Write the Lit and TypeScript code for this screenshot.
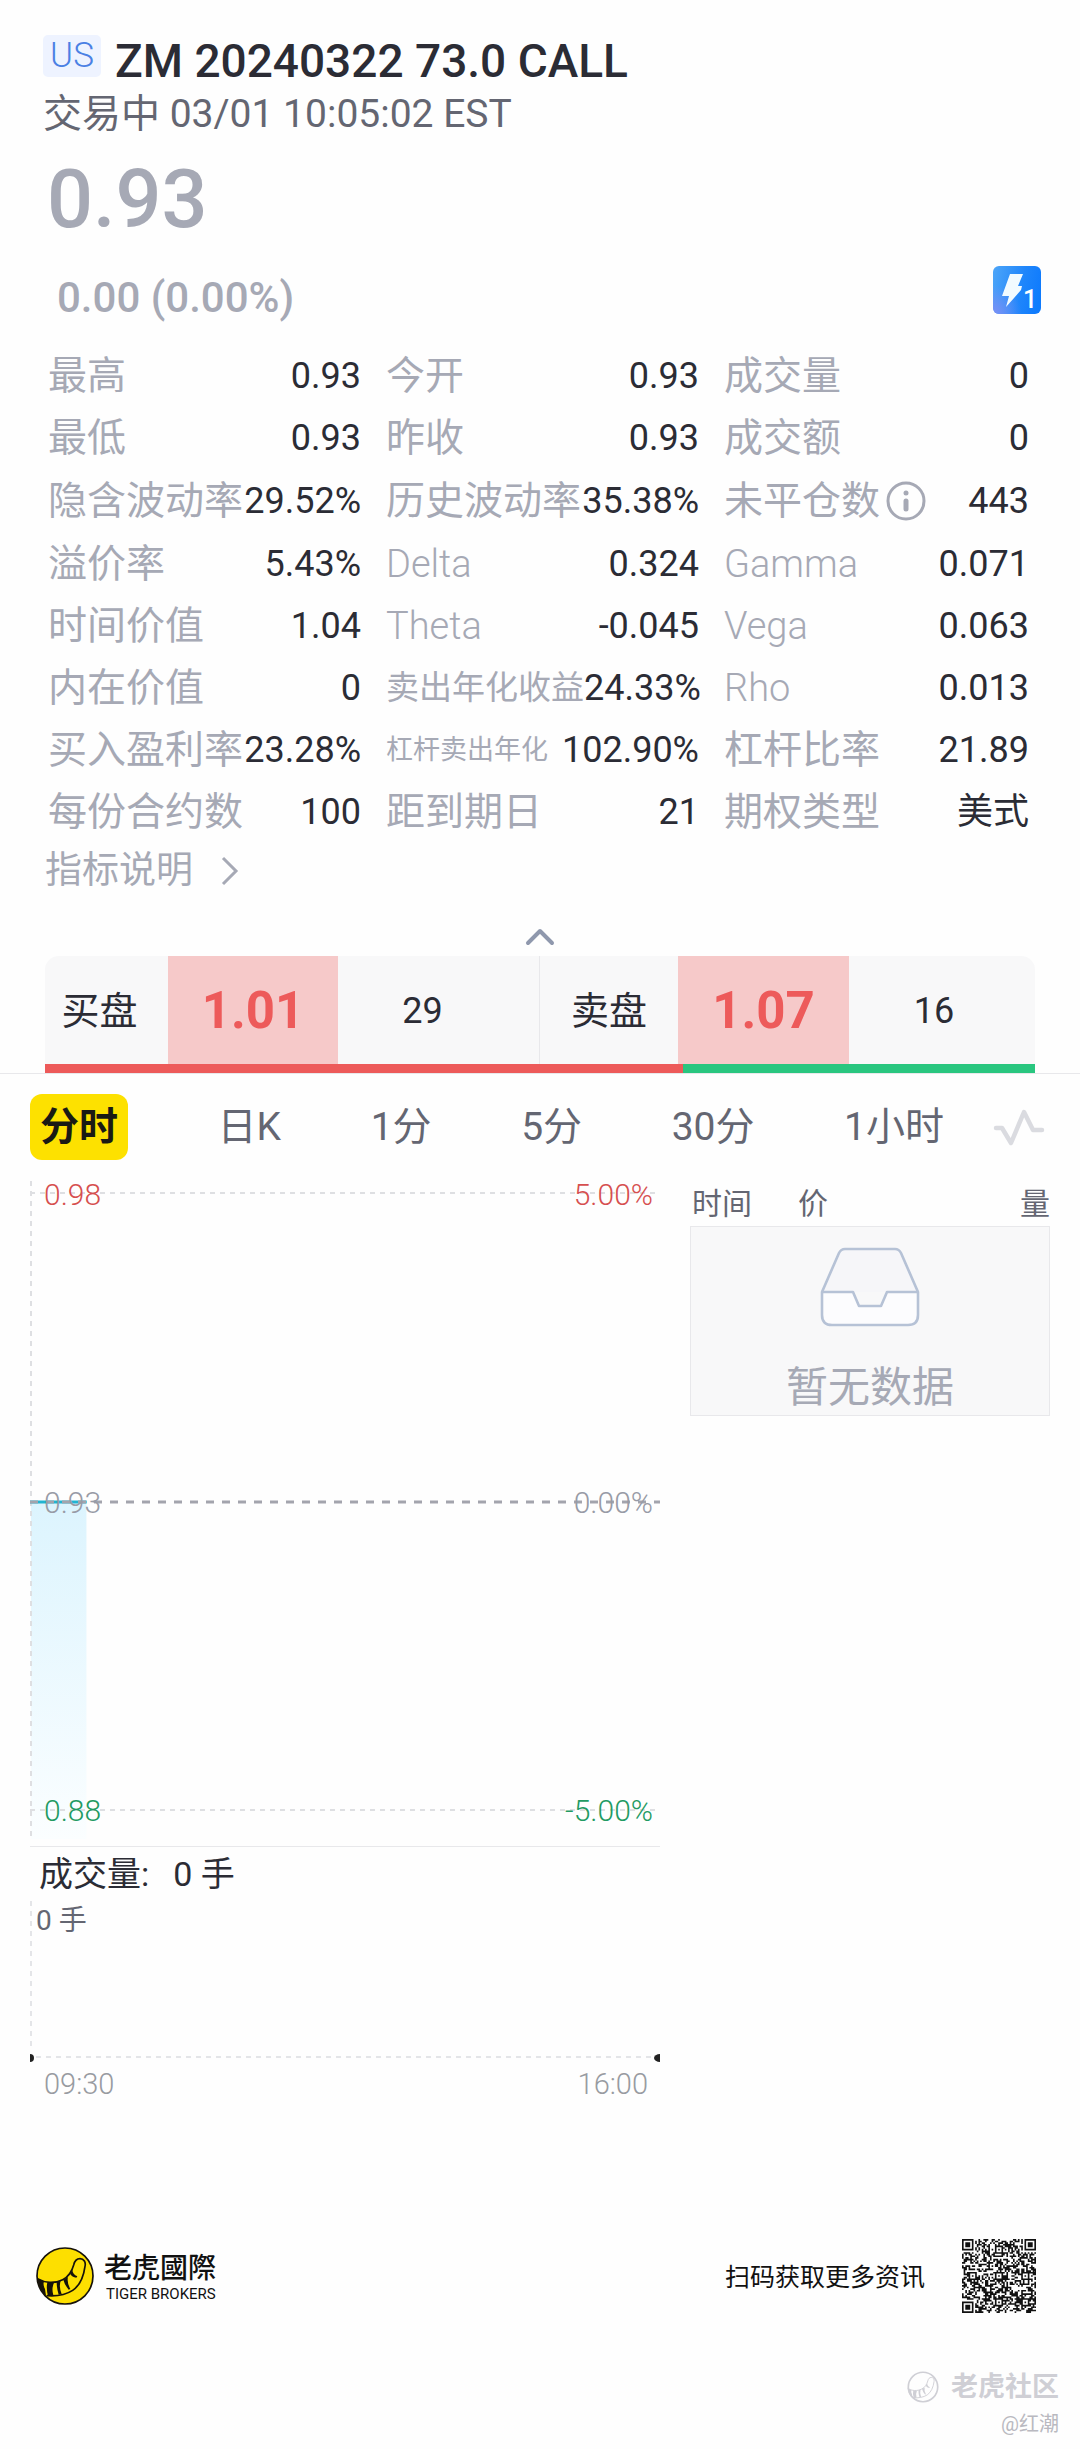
import { LitElement, html, css, svg, nothing } from "lit";
import { customElement, state } from "lit/decorators.js";
import { classMap } from "lit/directives/class-map.js";

interface Stat {
  label: string;
  value: string;
  size?: "mid" | "small";
  info?: boolean;
}

const STATS: Stat[] = [
  { label: "最高", value: "0.93" },
  { label: "今开", value: "0.93" },
  { label: "成交量", value: "0" },
  { label: "最低", value: "0.93" },
  { label: "昨收", value: "0.93" },
  { label: "成交额", value: "0" },
  { label: "隐含波动率", value: "29.52%" },
  { label: "历史波动率", value: "35.38%" },
  { label: "未平仓数", value: "443", info: true },
  { label: "溢价率", value: "5.43%" },
  { label: "Delta", value: "0.324" },
  { label: "Gamma", value: "0.071" },
  { label: "时间价值", value: "1.04" },
  { label: "Theta", value: "-0.045" },
  { label: "Vega", value: "0.063" },
  { label: "内在价值", value: "0" },
  { label: "卖出年化收益", value: "24.33%", size: "mid" },
  { label: "Rho", value: "0.013" },
  { label: "买入盈利率", value: "23.28%" },
  { label: "杠杆卖出年化", value: "102.90%", size: "small" },
  { label: "杠杆比率", value: "21.89" },
  { label: "每份合约数", value: "100" },
  { label: "距到期日", value: "21" },
  { label: "期权类型", value: "美式" },
];

const PERIODS = ["分时", "日K", "1分", "5分", "30分", "1小时"];

/* 45-module code: finders, timing lines, alignment marks and a scattered data area. */
function codePath(): string {
  const n = 45;
  const marks = [6, 22, 38];
  let seed = 20240322;
  const random = () => {
    seed = (seed * 1103515245 + 12345) % 2147483648;
    return seed / 2147483648;
  };
  const dark = (x: number, y: number, noise: boolean): boolean => {
    for (const [fx, fy] of [[0, 0], [n - 7, 0], [0, n - 7]]) {
      const dx = x - fx;
      const dy = y - fy;
      if (dx >= -1 && dx <= 7 && dy >= -1 && dy <= 7) {
        const ring = Math.max(Math.abs(dx - 3), Math.abs(dy - 3));
        return ring === 3 || ring <= 1;
      }
    }
    for (const my of marks) {
      for (const mx of marks) {
        const corner = (mx === 6 && my === 6) || (mx === 38 && my === 6) || (mx === 6 && my === 38);
        const ring = Math.max(Math.abs(x - mx), Math.abs(y - my));
        if (!corner && ring <= 2) return ring !== 1;
      }
    }
    if (x === 6) return y % 2 === 0;
    if (y === 6) return x % 2 === 0;
    return noise;
  };
  let d = "";
  for (let y = 0; y < n; y++) {
    for (let x = 0; x < n; x++) {
      if (dark(x, y, random() < 0.52)) d += `M${x} ${y}h1v1h-1z`;
    }
  }
  return d;
}

const tail = svg`
  <path d="M6 96C26 108 56 110 80 98C100 88 108 72 113 54C116 41 123 35 132 35C144 35 150 46 147 58C143 88 131 116 110 130C90 143 62 148 34 146"
    fill="none" stroke="currentColor" stroke-width="5" stroke-linecap="round" stroke-linejoin="round" />
  <path d="M4 94L24 104Q20 112 27 126L30 146L22 140Q6 120 4 94Z" fill="currentColor" />
  <path d="M34 106L54 107Q46 124 52 145L36 147Q30 124 34 106Z" fill="currentColor" />
  <path d="M62 105L74 101Q68 120 77 141L68 143Q62 124 62 105Z" fill="currentColor" />
  <path d="M82 98L96 90Q92 106 103 126L98 128Q86 114 82 98Z" fill="currentColor" />
  <path d="M102 80L109 68Q110 82 124 88L121 92Q108 90 102 80Z" fill="currentColor" />
`;

@customElement("app-root")
export class AppRoot extends LitElement {
  @state() private period = PERIODS[0];
  @state() private expanded = true;

  static styles = css`
    :host {
      display: block;
      box-sizing: border-box;
      background: #fefefe;
      color: #2b2c35;
      font-family: Roboto, "Noto Sans CJK SC", sans-serif;
      font-size: 36px;
      --muted: #a6a9b5;
      --slate: #646672;
      --red: #ed5a5a;
      --green: #29c67f;
      --line: #e8e8eb;
    }
    * { box-sizing: border-box; }
    h1, p, dl, dd { margin: 0; }
    button {
      border: 0;
      padding: 0;
      background: none;
      color: inherit;
      font: inherit;
      cursor: pointer;
    }
    svg { display: block; flex: none; }

    .summary { padding: 35px 39px 0 43px; }
    .title { display: flex; align-items: flex-start; gap: 14px; }
    .market {
      width: 58px;
      border-radius: 5px;
      background: #eef3ff;
      color: #4a80e4;
      font-size: 35px;
      font-weight: 300;
      line-height: 42px;
      text-align: center;
    }
    .name { font-size: 46px; font-weight: 500; line-height: 52px; white-space: nowrap; }
    .session { color: var(--slate); font-size: 39px; line-height: 54px; }
    .price {
      margin-top: 17px;
      padding-left: 4px;
      color: var(--muted);
      font-size: 81px;
      font-weight: 500;
      line-height: 84px;
    }
    .change {
      display: flex;
      justify-content: space-between;
      align-items: flex-start;
      margin-top: 24px;
      padding-left: 14px;
      color: var(--muted);
      font-size: 42px;
      font-weight: 500;
      line-height: 64px;
    }

    .stats {
      display: grid;
      grid-template-columns: 313fr 313fr 305fr;
      column-gap: 25px;
      margin-top: 15px;
      padding: 0 51px 0 48px;
    }
    .stat {
      display: flex;
      justify-content: space-between;
      align-items: center;
      min-width: 0;
      line-height: 62px;
      white-space: nowrap;
    }
    .stat dt { display: flex; align-items: center; gap: 6px; color: var(--muted); font-size: 39px; }
    .stat dt.mid { font-size: 33px; }
    .stat dt.small { font-size: 27px; }
    .stat dt.latin { font-size: 38px; font-weight: 300; }
    .info { display: flex; align-items: center; height: 64px; }
    .explain {
      display: inline-flex;
      align-items: center;
      gap: 28px;
      margin-left: 45px;
      color: var(--muted);
      font-size: 37px;
      line-height: 56px;
      text-decoration: none;
    }
    .fold {
      display: flex;
      justify-content: center;
      align-items: center;
      width: 60px;
      height: 38px;
      margin: 19px auto 0;
    }

    .quotes { padding: 0 45px; border-bottom: 1px solid var(--line); }
    .book {
      display: grid;
      grid-template-columns: 123fr 170fr 202fr 138fr 171fr 186fr;
      overflow: hidden;
      border-radius: 14px 14px 0 0;
      background: #f8f8f9;
      line-height: 106px;
      text-align: center;
    }
    .book > span { padding-top: 2px; }
    .book > .side { padding-right: 14px; font-size: 38px; white-space: nowrap; }
    .book > .side.ask { padding-right: 0; }
    .quote { background: #f6c9c9; color: var(--red); font-size: 51px; font-weight: 700; }
    .book > .lots { padding-right: 16px; }
    .book > .lots.bid { padding-right: 32px; border-right: 1px solid var(--line); }
    .ratio { display: flex; height: 9px; }
    .buy { background: var(--red); }
    .sell { flex: 1; background: var(--green); }

    .periods { display: flex; align-items: center; gap: 49px; padding: 20px 35px 0 30px; }
    .tabs { display: flex; flex: 1; justify-content: space-between; color: var(--slate); font-size: 39px; line-height: 66px; }
    .tabs button { white-space: nowrap; }
    .tabs .active {
      padding: 0 10px;
      border-radius: 12px;
      background: #fde100;
      color: #1a1a14;
      font-weight: 700;
    }

    .board {
      display: grid;
      grid-template-columns: 630fr 360fr;
      column-gap: 30px;
      align-items: start;
      padding: 21px 30px 0;
    }
    .plot { position: relative; }
    .plot > svg { position: absolute; inset: 0; width: 100%; height: 100%; }
    .axis {
      position: relative;
      display: flex;
      flex-direction: column;
      justify-content: space-between;
      height: 665px;
      padding: 1px 0 23px;
      font-size: 30px;
      font-weight: 300;
      line-height: 25px;
    }
    .level { display: flex; justify-content: space-between; padding: 0 7px 0 14px; color: #989ba6; }
    .level.up { color: #d64f4f; }
    .level.down { color: #229a62; }
    .volume-title {
      display: flex;
      gap: 24px;
      padding-left: 9px;
      border-top: 1px solid var(--line);
      font-size: 34px;
      line-height: 54px;
    }
    .volume-scale { position: relative; height: 162px; padding-left: 6px; color: var(--slate); font-size: 28px; line-height: 40px; }
    .times { display: flex; justify-content: space-between; padding: 0 12px 0 14px; color: #989ba1; font-size: 29px; font-weight: 300; line-height: 42px; }

    .tape { width: 100%; border-collapse: separate; border-spacing: 0; }
    .tape th { padding: 0; color: var(--slate); font-size: 30px; font-weight: 400; line-height: 45px; text-align: left; }
    .tape .time { width: 30%; padding-left: 2px; }
    .tape .size { text-align: right; }
    .empty { padding: 20px 0 0; border: 1px solid var(--line); background: #f8f8f9; color: var(--muted); font-size: 42px; line-height: 54px; text-align: center; }
    .empty svg { margin: 0 auto 34px; }

    .footer { display: flex; align-items: center; margin-top: 134px; padding: 0 44px 0 36px; color: #111; }
    .brand { display: flex; align-items: center; gap: 10px; }
    .brand-name { padding-top: 3px; font-family: Roboto, "Noto Sans CJK TC", sans-serif; font-size: 28px; font-weight: 500; line-height: 33px; }
    .brand-latin { padding-left: 2px; font-size: 15px; line-height: 18px; }
    .scan { margin-left: auto; margin-right: 37px; padding-top: 4px; font-size: 25px; line-height: 36px; }

    .credit { margin-top: 54px; padding: 0 21px 8px 0; color: #cfcfd5; text-align: right; }
    .community { display: flex; justify-content: flex-end; align-items: center; gap: 12px; font-size: 27px; font-weight: 700; line-height: 40px; }
    .author { color: #b9b9c0; font-size: 20px; line-height: 34px; }
  `;

  private renderStat(stat: Stat) {
    const latin = /^[A-Z]/.test(stat.label);
    return html`
      <div class="stat">
        <dt class=${classMap({ mid: stat.size === "mid", small: stat.size === "small", latin })}>
          ${stat.label}${stat.info
            ? html`<button class="info" aria-label="未平仓数说明">
                <svg width="40" height="40" viewBox="0 0 40 40" fill="none" stroke="#a6a9b5">
                  <circle cx="20" cy="20" r="18" stroke-width="3" />
                  <circle cx="20" cy="12" r="2.5" fill="#a6a9b5" stroke="none" />
                  <path d="M20 20V28" stroke-width="5" stroke-linecap="round" />
                </svg>
              </button>`
            : nothing}
        </dt>
        <dd>${stat.value}</dd>
      </div>
    `;
  }

  private renderChart() {
    return html`
      <section>
        <div class="plot">
          <svg aria-hidden="true">
            <defs>
              <linearGradient id="area" x1="0" y1="0" x2="0" y2="1">
                <stop offset="0" stop-color="#dcf4fe" />
                <stop offset="1" stop-color="#fbfeff" />
              </linearGradient>
            </defs>
            <rect x="1" y="321" width="8.8%" height="337" fill="url(#area)" />
            <g stroke="#dedfe2" stroke-width="2" stroke-dasharray="5 5">
              <path d="M1 0V660" />
              <line x1="0" y1="12" x2="100%" y2="12" />
              <line x1="0" y1="629" x2="100%" y2="629" />
            </g>
            <line x1="0" y1="321" x2="9%" y2="321" stroke="#22b4d2" stroke-width="3" />
            <line x1="0" y1="321" x2="100%" y2="321" stroke="#a3a4ad" stroke-width="3" stroke-dasharray="8 8" />
          </svg>
          <div class="axis">
            <div class="level up"><span>0.98</span><span>5.00%</span></div>
            <div class="level"><span>0.93</span><span>0.00%</span></div>
            <div class="level down"><span>0.88</span><span>-5.00%</span></div>
          </div>
        </div>
        <div class="volume-title"><span>成交量:</span><span>0 手</span></div>
        <div class="plot">
          <svg aria-hidden="true">
            <g stroke="#e4e5e8" stroke-width="2" stroke-dasharray="5 5">
              <path d="M1 0V150" />
              <line x1="6" y1="156" x2="100%" y2="156" />
            </g>
            <ellipse cx="0" cy="157" rx="4" ry="4" fill="#222" />
            <ellipse cx="100%" cy="157" rx="6" ry="4" fill="#222" />
          </svg>
          <div class="volume-scale">0 手</div>
        </div>
        <div class="times"><span>09:30</span><span>16:00</span></div>
      </section>
    `;
  }

  render() {
    return html`
      <header class="summary">
        <div class="title">
          <span class="market">US</span>
          <h1 class="name">ZM 20240322 73.0 CALL</h1>
        </div>
        <p class="session">交易中 03/01 10:05:02 EST</p>
        <p class="price">0.93</p>
        <div class="change">
          <span>0.00 (0.00%)</span>
          <button aria-label="行情等级">
            <svg width="48" height="48" viewBox="0 0 48 48">
              <defs>
                <linearGradient id="level" x1="0" y1="0.3" x2="1" y2="0.5">
                  <stop offset="0" stop-color="#4aa3f8" />
                  <stop offset="0.6" stop-color="#1f86fb" />
                  <stop offset="1" stop-color="#0f7bfd" />
                </linearGradient>
                <radialGradient id="glow" cx="0" cy="1" r="0.6">
                  <stop offset="0" stop-color="#7d8ff5" />
                  <stop offset="1" stop-color="#7d8ff5" stop-opacity="0" />
                </radialGradient>
              </defs>
              <rect width="48" height="48" rx="6" fill="url(#level)" />
              <rect width="48" height="48" rx="6" fill="url(#glow)" />
              <path d="M17 8H30L25 20H29L28 24L13 41L16 30H9Z" fill="#f2fbff" />
              <text x="30" y="42" fill="#fff" font-size="25" font-weight="500">1</text>
            </svg>
          </button>
        </div>
      </header>

      <dl class="stats">${STATS.map((stat) => this.renderStat(stat))}</dl>
      <a class="explain" href="#indicators">
        指标说明
        <svg width="18" height="30" viewBox="0 0 18 30" fill="none" stroke="currentColor" stroke-width="3">
          <path d="M2 2L15 15L2 28" />
        </svg>
      </a>
      <button
        class="fold"
        aria-label="收起"
        aria-expanded=${this.expanded}
        @click=${() => (this.expanded = !this.expanded)}
      >
        <svg width="30" height="18" viewBox="0 0 30 18" fill="none" stroke="#8f98ad" stroke-width="4" stroke-linecap="round" stroke-linejoin="round">
          <path d="M3 15L15 3L27 15" />
        </svg>
      </button>

      <section class="quotes">
        <div class="book">
          <span class="side">买盘</span>
          <span class="quote">1.01</span>
          <span class="lots bid">29</span>
          <span class="side ask">卖盘</span>
          <span class="quote">1.07</span>
          <span class="lots">16</span>
        </div>
        <div class="ratio"><span class="buy" style="width: ${(29 / 45) * 100}%"></span><span class="sell"></span></div>
      </section>

      <nav class="periods">
        <div class="tabs">
          ${PERIODS.map(
            (name) => html`<button
              class=${classMap({ active: name === this.period })}
              aria-pressed=${name === this.period}
              @click=${() => (this.period = name)}
            >${name}</button>`
          )}
        </div>
        <button aria-label="指标">
          <svg width="52" height="38" viewBox="0 0 52 38" fill="none" stroke="#dadbe0" stroke-width="4.5" stroke-linecap="round" stroke-linejoin="round">
            <path d="M3 20H9L18 35L31 4L40 22H49" />
          </svg>
        </button>
      </nav>

      <main class="board">
        ${this.renderChart()}
        <table class="tape">
          <thead>
            <tr>
              <th class="time">时间</th>
              <th>价</th>
              <th class="size">量</th>
            </tr>
          </thead>
          <tbody>
            <tr>
              <td class="empty" colspan="3">
                <svg width="100" height="80" viewBox="0 0 100 80" stroke="#b6c2d6" stroke-width="2.6" stroke-linejoin="round">
                  <path d="M2 45L19 6Q21 2 25 2H75Q79 2 81 6L98 45" fill="#f6f6f9" />
                  <path d="M2 45H33L39 59H61L67 45H98V68Q98 78 88 78H12Q2 78 2 68Z" fill="#fcfcfe" />
                </svg>
                暂无数据
              </td>
            </tr>
          </tbody>
        </table>
      </main>

      <footer class="footer">
        <div class="brand">
          <svg width="58" height="58" viewBox="0 0 174 174" color="#16120a">
            <circle cx="87" cy="87" r="84" fill="#fddf00" stroke="currentColor" stroke-width="5" />
            ${tail}
          </svg>
          <div>
            <div class="brand-name" lang="zh-Hant">老虎國際</div>
            <div class="brand-latin">TIGER BROKERS</div>
          </div>
        </div>
        <span class="scan">扫码获取更多资讯</span>
        <svg width="74" height="74" viewBox="0 0 45 45" role="img" aria-label="二维码">
          <path d=${codePath()} fill="#111" />
        </svg>
      </footer>
      <div class="credit">
        <div class="community">
          <svg width="32" height="32" viewBox="0 0 174 174">
            <circle cx="87" cy="87" r="80" fill="none" stroke="currentColor" stroke-width="9" />
            ${tail}
          </svg>
          <span>老虎社区</span>
        </div>
        <div class="author">@红潮</div>
      </div>
    `;
  }
}
